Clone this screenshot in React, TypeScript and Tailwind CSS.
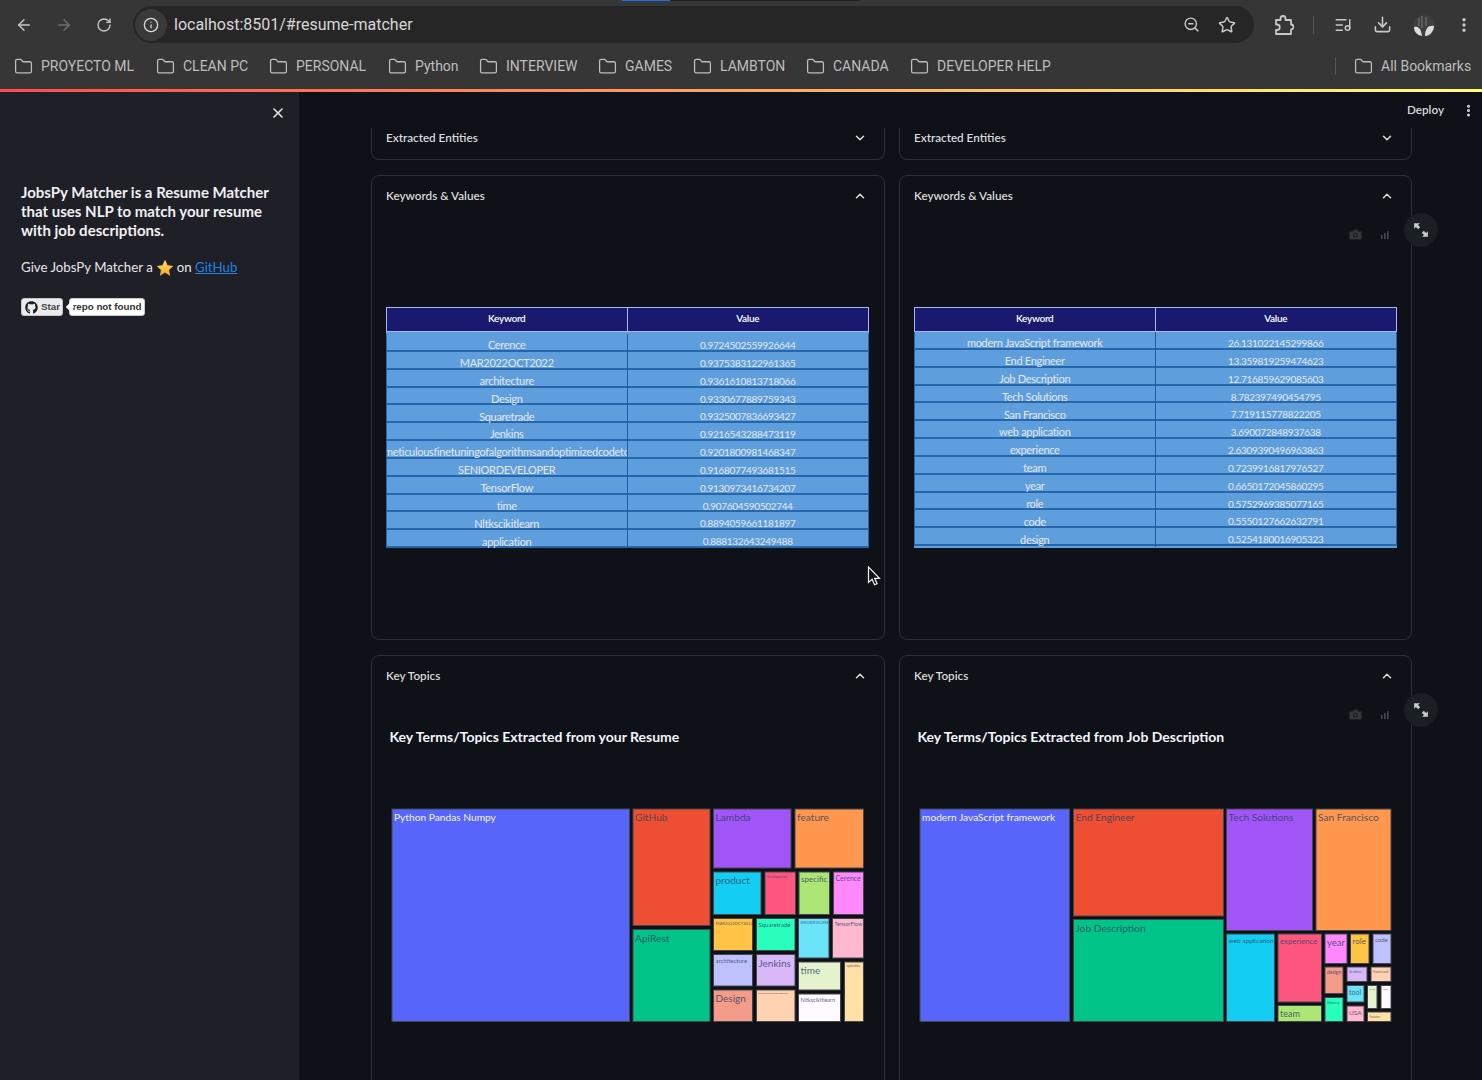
import { ArrowLeft, ArrowRight, Camera, ChevronDown, ChevronUp, Download, EllipsisVertical, Folder, Info, ListMusic, RotateCw, Star, X, ZoomOut } from 'lucide-react';
import { FaGithub } from 'react-icons/fa';

type Cell = [string, number, number, number, number, string, number];

const BOOKMARKS = [
  { name: 'PROYECTO ML', w: 'w-[142px]' },
  { name: 'CLEAN PC', w: 'w-[113px]' },
  { name: 'PERSONAL', w: 'w-[119px]' },
  { name: 'Python', w: 'w-[91px]' },
  { name: 'INTERVIEW', w: 'w-[119px]' },
  { name: 'GAMES', w: 'w-[95px]' },
  { name: 'LAMBTON', w: 'w-[113px]' },
  { name: 'CANADA', w: 'w-[104px]' },
  { name: 'DEVELOPER HELP', w: 'w-[160px]' },
];

const RESUME_ROWS = [
  ['Cerence', '0.9724502559926644'],
  ['MAR2022OCT2022', '0.9375383122961365'],
  ['architecture', '0.9361610813718066'],
  ['Design', '0.9330677889759343'],
  ['Squaretrade', '0.9325007836693427'],
  ['Jenkins', '0.9216543288473119'],
  ['meticulousfinetuningofalgorithmsandoptimizedcodeto', '0.9201800981468347'],
  ['SENIORDEVELOPER', '0.9168077493681515'],
  ['TensorFlow', '0.9130973416734207'],
  ['time', '0.907604590502744'],
  ['Nltkscikitlearn', '0.8894059661181897'],
  ['application', '0.888132643249488'],
];

const JOB_ROWS = [
  ['modern JavaScript framework', '26.131022145299866'],
  ['End Engineer', '13.359819259474623'],
  ['Job Description', '12.716859629085603'],
  ['Tech Solutions', '8.782397490454795'],
  ['San Francisco', '7.719115778822205'],
  ['web application', '3.690072848937638'],
  ['experience', '2.6309390496963863'],
  ['team', '0.7239916817976527'],
  ['year', '0.6650172045860295'],
  ['role', '0.5752969385077165'],
  ['code', '0.5550127662632791'],
  ['design', '0.5254180016905323'],
];

const RESUME_CELLS: Cell[] = [
  ['Python Pandas Numpy', 392, 809, 629.5, 1021.5, '#5865fa', 10.2],
  ['GitHub', 633, 809, 710, 925.5, '#ee4e32', 10.2],
  ['ApiRest', 633, 929.5, 710, 1021.5, '#00c488', 10.2],
  ['Lambda', 713.5, 809, 791, 868, '#a155f8', 10.2],
  ['feature', 795, 809, 863.5, 868, '#ff974f', 10.2],
  ['product', 713.5, 872, 761, 914.5, '#14cdf2', 10],
  ['development', 765, 872, 795.5, 914.5, '#ff5680', 3.5],
  ['specific', 799, 872, 829.5, 914.5, '#abe574', 8],
  ['Cerence', 833.5, 872, 863.5, 914.5, '#ff88ff', 7],
  ['MAR2022OCT2022', 713.5, 918.5, 752.5, 950.5, '#ffc445', 4.2],
  ['Squaretrade', 756.5, 918.5, 795, 950.5, '#28ffbd', 6],
  ['SENIORDEVELOPER', 798.5, 918.5, 829, 958, '#6be3f8', 3],
  ['TensorFlow', 832.5, 918.5, 863.5, 958, '#ffb8cf', 5.5],
  ['architecture', 713.5, 954.5, 752.5, 986, '#bec1fe', 6],
  ['Jenkins', 756.5, 954.5, 795, 986, '#d9b8fa', 10],
  ['time', 798.5, 962, 840.5, 990, '#e4f3ce', 10],
  ['Nltkscikitlearn', 798.5, 994, 840.5, 1021.5, '#fffaff', 5.5],
  ['application', 844.5, 962, 863.5, 1021.5, '#ffe0a5', 2.8],
  ['Design', 713.5, 990, 752.5, 1021.5, '#f49b8a', 10],
  ['meticulousfinetuningofalgorithms', 756.5, 990, 795, 1021.5, '#ffd2b1', 2],
];

const JOB_CELLS: Cell[] = [
  ['modern JavaScript framework', 920, 809, 1069.5, 1021.5, '#5865fa', 10.2],
  ['End Engineer', 1073.5, 809, 1223.5, 916, '#ee4e32', 10.2],
  ['Job Description', 1073.5, 919.5, 1223.5, 1021.5, '#00c488', 10.2],
  ['Tech Solutions', 1226.5, 809, 1312.5, 930.5, '#a155f8', 10.2],
  ['San Francisco', 1316, 809, 1391, 930.5, '#ff974f', 10.2],
  ['web application', 1226.5, 934, 1274.5, 1021.5, '#14cdf2', 6.5],
  ['experience', 1278, 934, 1321.5, 1002, '#ff5680', 7.8],
  ['team', 1278, 1005.5, 1321.5, 1021.5, '#abe574', 9],
  ['year', 1325, 934, 1347, 963.5, '#ff88ff', 9.5],
  ['role', 1350.5, 934, 1369, 963.5, '#ffc445', 8],
  ['code', 1373, 934, 1391, 963.5, '#bec1fe', 6],
  ['design', 1325, 967, 1343, 993.5, '#f49b8a', 5],
  ['Jenkins', 1347, 967, 1367, 981.5, '#d9b8fa', 4],
  ['frontend', 1371, 967, 1391, 981.5, '#ffd2b1', 4],
  ['library', 1325, 997.5, 1343, 1021.5, '#28ffbd', 4.5],
  ['tool', 1347, 985.5, 1364, 1002, '#6be3f8', 7],
  ['USA', 1347, 1006, 1364, 1021.5, '#ffb8cf', 6.5],
  ['client', 1367.5, 985.5, 1377, 1008.5, '#e4f3ce', 2.2],
  ['stack', 1381, 985.5, 1391, 1008.5, '#fffaff', 2.2],
  ['future', 1367.5, 1012, 1391, 1021.5, '#ffe0a5', 4],
];

function BrowserChrome() {
  return (
    <div className="bg-[#363636] font-[Roboto,sans-serif]">
      <div className="flex h-[1px]">
        <div className="ml-[622px] w-[48px] bg-[#1a73e8]" />
        <div className="w-[190px] bg-[#222222]" />
      </div>
      <div className="flex h-[42px] items-end">
        <div className="flex h-[37px] w-[133px] items-center pl-[15px] text-[#c8c8c8]">
          <ArrowLeft size={18} strokeWidth={2} />
          <ArrowRight size={18} strokeWidth={2} className="ml-[22px] text-[#6e6e6e]" />
          <RotateCw size={16} strokeWidth={2} className="ml-[23px]" />
        </div>
        <div className="flex h-[37px] w-[1121px] items-center rounded-full bg-[#262626] pr-[18px]">
          <div className="ml-[2px] flex h-[32px] w-[32px] items-center justify-center rounded-full bg-[#3a3a3a] text-[#d8d8d8]">
            <Info size={16} strokeWidth={2} />
          </div>
          <span className="ml-[7px] text-[16px] text-[#d6d6d6]">localhost:8501/#resume-matcher</span>
          <div className="ml-auto flex items-center gap-[18px] text-[#c8c8c8]">
            <ZoomOut size={17} strokeWidth={2} />
            <Star size={18} strokeWidth={2} />
          </div>
        </div>
        <div className="flex h-[37px] flex-1 items-center pl-[20px] text-[#c8c8c8]">
          <svg width="20" height="22" viewBox="0 0 20 22" fill="none" stroke="currentColor" strokeWidth="1.800" strokeLinejoin="round">
            <path d="M2 6h4.500V4.500a2.500 2.500 0 0 1 5 0V6H17v4.500a2.500 2.500 0 0 1 0 5V20H2v-4h1a2.500 2.500 0 0 0 0-5.500H2z" />
          </svg>
          <div className="ml-[19px] h-[18px] w-px bg-[#555555]" />
          <ListMusic size={18} strokeWidth={2} className="ml-[20px]" />
          <Download size={19} strokeWidth={2} className="ml-[21px]" />
          <svg width="24" height="24" viewBox="0 0 24 24" className="ml-[20px] mt-[3px]">
            <circle cx="12" cy="12" r="11" fill="#3f3f3f" />
            <path d="M2 13c4-1 7 1 8 9-5-1-8-4-8-9zM13 22c0-8 4-11 9-10 0 5-4 10-9 10z" fill="#dcdcdc" />
            <path d="M10 2v12M7 4v8M14 3v9" stroke="#7a7a7a" strokeWidth="1" />
          </svg>
          <EllipsisVertical size={18} strokeWidth={2.4} className="ml-[19px]" />
        </div>
      </div>
      <div className="flex h-[46px] items-center pl-[14px] text-[14px] text-[#bdbdbd]">
        {BOOKMARKS.map(b => (
          <div key={b.name} className={`flex items-center ${b.w}`}>
            <Folder size={19} strokeWidth={1.6} />
            <span className="ml-[8px] whitespace-nowrap">{b.name}</span>
          </div>
        ))}
        <div className="ml-[265px] h-[18px] w-px bg-[#555555]" />
        <div className="ml-[18px] flex items-center">
          <Folder size={19} strokeWidth={1.6} />
          <span className="ml-[8px] whitespace-nowrap">All Bookmarks</span>
        </div>
      </div>
      <div className="h-[3px] bg-[linear-gradient(90deg,#ff4b4b,#fffd80)]" />
    </div>
  );
}

function Sidebar() {
  return (
    <aside className="w-[299px] shrink-0 bg-[#1f1f27] text-[#e6e6e8]">
      <div className="flex justify-end pr-[13px] pt-[13px]">
        <X size={16} strokeWidth={2.4} />
      </div>
      <div className="pl-[21px] pt-[62px]">
        <p className="w-[262px] text-[15px] font-bold leading-[19px] text-[#f0f0f2]">
          JobsPy Matcher is a Resume Matcher that uses NLP to match your resume with job descriptions.
        </p>
        <p className="mt-[18px] flex h-[19px] items-center text-[13.25px]">
          Give JobsPy Matcher a
          <svg width="18" height="18" viewBox="0 0 24 24" className="mx-[3px]">
            <defs>
              <linearGradient id="starFill" x1="0" y1="0" x2="0" y2="1">
                <stop offset="0" stopColor="#ffe066" />
                <stop offset="1" stopColor="#f5a623" />
              </linearGradient>
            </defs>
            <path d="M12 1l3.400 7.200 7.600 1-5.600 5.400 1.500 7.900L12 18l-6.900 4.500 1.500-7.900L1 9.200l7.600-1z" fill="url(#starFill)" />
          </svg>
          on&nbsp;<a className="text-[#1c83e1] underline">GitHub</a>
        </p>
        <div className="mt-[21px] flex items-center font-['Liberation_Sans',sans-serif] text-[9.8px] font-bold">
          <div className="flex h-[18px] w-[42px] items-center gap-[3px] rounded-[3px] border border-[#c4c4c4] bg-[#ececec] pl-[3px] text-[#444444]">
            <FaGithub size={13} className="text-[#1b1f23]" />
            Star
          </div>
          <div className="relative ml-[6px] flex h-[18px] w-[76px] items-center justify-center rounded-[3px] border border-[#c8c8c8] bg-white text-[#333333]">
            <span className="absolute left-[-3px] top-[5px] h-[6px] w-[6px] rotate-45 bg-white" />
            repo not found
          </div>
        </div>
      </div>
    </aside>
  );
}

function KeywordTable({ rows, padTop }: { rows: string[][]; padTop: boolean }) {
  return (
    <div className="ml-[14px] mt-[91px] h-[241px] w-[483px] overflow-hidden bg-[#5f9edd] text-[10px] tracking-[-0.3px]">
      <div className="grid h-[25px] grid-cols-2 border border-[#aab6ee] bg-[#191970] text-center font-semibold leading-[21px] text-white">
        <div className="border-r border-[#aab6ee]">Keyword</div>
        <div>Value</div>
      </div>
      {padTop && <div className="h-[2px]" />}
      {rows.map(([key, value]) => (
        <div key={key} className="grid h-[17.85px] grid-cols-2 border-x border-b-2 border-[#2766aa] text-[#e3e8f0]">
          <div className="flex items-center justify-center overflow-hidden whitespace-nowrap border-r border-[#225d9e] pt-[4px] text-[11px]">{key}</div>
          <div className="flex items-center justify-center pt-[4px]">{value}</div>
        </div>
      ))}
    </div>
  );
}

function Treemap({ minX, title, cells }: { minX: number; title: string; cells: Cell[] }) {
  return (
    <svg width="511" height="384" viewBox={`${minX} 696 511 384`} className="block">
      <text x={minX + 17.5} y="741.5" fontSize="14" fontWeight="700" fill="#f2f5fa">
        {title}
      </text>
      {cells.map(([label, x1, y1, x2, y2, fill, size], i) => (
        <g key={label}>
          <rect x={x1} y={y1} width={x2 - x1} height={y2 - y1} fill={fill} stroke="#44464c" strokeWidth="1" />
          <text
            x={x1 + 2}
            y={y1 + 2 + size}
            fontSize={size}
            fill={i === 0 ? '#f2f5fa' : '#2a3f5f'}
            fillOpacity={i === 0 ? 1 : 0.8}
          >
            {label}
          </text>
        </g>
      ))}
    </svg>
  );
}

function ChartTools() {
  return (
    <div className="absolute right-[-27px] top-[41px] flex items-center">
      <Camera size={15} className="fill-[#34373c] text-[#1c1f24]" />
      <svg width="12" height="12" viewBox="0 0 12 12" className="ml-[16px]">
        <path d="M2 7h1.500v4H2zM5 5h1.500v6H5zM8 3h1.500v8H8z" fill="#45484e" />
      </svg>
      <div className="ml-[13px] flex h-[34px] w-[34px] -translate-y-[4px] items-center justify-center rounded-full bg-[#1a1e25]">
        <svg width="16" height="16" viewBox="0 0 14 14" fill="#c6c9cd">
          <path d="M1 1h5L4.400 2.600 6.300 4.500 4.500 6.300 2.600 4.400 1 6zM13 13H8l1.600-1.600-1.900-1.900 1.800-1.800 1.900 1.900L13 8z" />
        </svg>
      </div>
    </div>
  );
}

function CardHeader({ title, open }: { title: string; open: boolean }) {
  return (
    <div className="flex h-[40px] items-center justify-between pl-[14px] pr-[17px] text-[11.7px] font-semibold text-[#d8d9dc]">
      <span>{title}</span>
      {open ? <ChevronUp size={14} strokeWidth={2.6} /> : <ChevronDown size={14} strokeWidth={2.6} />}
    </div>
  );
}

export default function App() {
  return (
    <div className="relative flex h-[1080px] flex-col overflow-hidden bg-[#0e1117] font-[Lato,sans-serif]">
      <BrowserChrome />
      <div className="flex min-h-0 flex-1">
        <Sidebar />
        <main className="min-w-0 flex-1">
          <div className="flex h-[36px] items-center justify-end pr-[6px] text-[11.7px] font-semibold text-[#d8d9dc]">
            Deploy
            <EllipsisVertical size={15} strokeWidth={2.8} className="ml-[17px]" />
          </div>
          <div className="ml-[72px] grid w-[1041px] grid-cols-[514px_513px] gap-x-[14px] gap-y-[15px]">
            <div className="h-[32px] overflow-hidden rounded-b-lg border-x border-b border-[#2b2e35]">
              <div className="-mt-[10px]"><CardHeader title="Extracted Entities" open={false} /></div>
            </div>
            <div className="h-[32px] overflow-hidden rounded-b-lg border-x border-b border-[#2b2e35]">
              <div className="-mt-[10px]"><CardHeader title="Extracted Entities" open={false} /></div>
            </div>

            <div className="h-[465px] rounded-lg border border-[#2b2e35]">
              <CardHeader title="Keywords & Values" open />
              <KeywordTable rows={RESUME_ROWS} padTop />
            </div>
            <div className="relative h-[465px] rounded-lg border border-[#2b2e35]">
              <CardHeader title="Keywords & Values" open />
              <ChartTools />
              <KeywordTable rows={JOB_ROWS} padTop={false} />
            </div>

            <div className="h-[440px] rounded-lg border border-[#2b2e35]">
              <CardHeader title="Key Topics" open />
              <Treemap minX={372} title="Key Terms/Topics Extracted from your Resume" cells={RESUME_CELLS} />
            </div>
            <div className="relative h-[440px] rounded-lg border border-[#2b2e35]">
              <CardHeader title="Key Topics" open />
              <ChartTools />
              <Treemap minX={900} title="Key Terms/Topics Extracted from Job Description" cells={JOB_CELLS} />
            </div>
          </div>
        </main>
      </div>
      {/* mouse pointer caught in the recording */}
      <svg width="15" height="21" viewBox="0 0 15 21" className="absolute left-[867px] top-[566px]">
        <path d="M1.500 1v15.500l3.600-3.200 2.400 5.500 2.600-1.100-2.400-5.400h4.800z" fill="#0e1117" stroke="#f2f2f2" strokeWidth="1.200" />
      </svg>
    </div>
  );
}
